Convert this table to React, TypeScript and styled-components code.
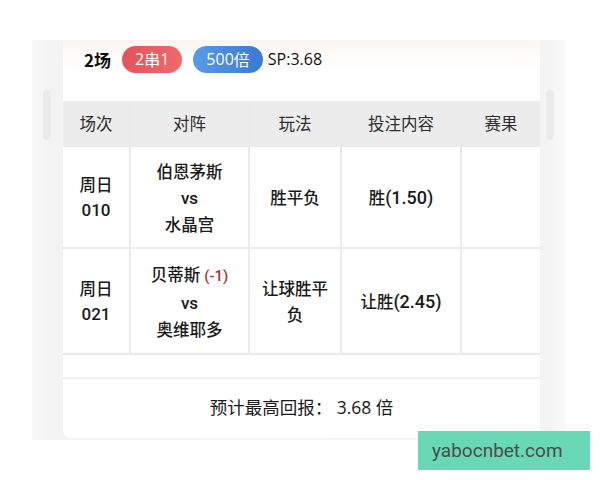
import React from "react";
import styled, { createGlobalStyle } from "styled-components";

const Global = createGlobalStyle`
  html, body { margin: 0; padding: 0; background: #ffffff; }
  body { font-family: "Noto Sans CJK SC", "Noto Sans", sans-serif; color: #1a1a1a; }
`;

const Page = styled.div`
  width: 600px;
  height: 480px;
  position: relative;
  overflow: hidden;
  background: #fff;
`;

const Frame = styled.div`
  position: relative;
  margin: 40px 0 0 32px;
  width: 534px;
  height: 400px;
  background: linear-gradient(90deg, #fafafa 0%, #f3f3f3 3%, #f4f4f4 97%, #fafafa 100%);
  display: flex;
  padding-left: 31px;
  box-sizing: border-box;
`;

const ScrollHint = styled.div<{ $side: "left" | "right" }>`
  position: absolute;
  top: 50px;
  ${(p) => (p.$side === "left" ? "left: 11px;" : "right: 12px;")}
  width: 8px;
  height: 50px;
  border-radius: 4px;
  background: #ebebeb;
`;

const Card = styled.div`
  width: 477px;
  height: 398px;
  background: #fff;
  border-radius: 0 0 8px 8px;
  display: flex;
  flex-direction: column;
  overflow: hidden;
`;

const Top = styled.div`
  height: 61px;
  display: flex;
  align-items: flex-start;
  padding: 5px 0 0 21px;
  box-sizing: border-box;
  background: linear-gradient(180deg, #fdf5f2 0%, #fffcfa 30%, #ffffff 60%);
`;

const TopRow = styled.div`
  display: flex;
  align-items: center;
  height: 28px;
`;

const Count = styled.span`
  font-weight: 700;
  font-size: 17px;
  color: #111;
  margin-right: 11px;
`;

const Pill = styled.span<{ $color: "red" | "blue" }>`
  display: inline-flex;
  align-items: center;
  justify-content: center;
  height: 27px;
  padding: 0 13px;
  border-radius: 14px;
  color: #fff;
  font-size: 16px;
  background: ${(p) =>
    p.$color === "red"
      ? "linear-gradient(90deg, #e4535c, #ee6a6c)"
      : "linear-gradient(90deg, #5a9be6, #3b79d3)"};
  margin-right: ${(p) => (p.$color === "red" ? "11px" : "5px")};
`;

const Num = styled.span`
  font-family: "Open Sans", "Noto Sans", sans-serif;
`;

const SP = styled.span`
  font-family: "Open Sans", "Noto Sans", sans-serif;
  font-size: 16px;
  color: #111;
`;

const Table = styled.div`
  display: grid;
  grid-template-columns: 66px 117px 90px 118px 78px;
  column-gap: 2px;
  row-gap: 2px;
  background: #ebebeb;
  padding-bottom: 2px;
`;

const HeadCell = styled.div`
  height: 44px;
  background: #ececec;
  display: flex;
  align-items: center;
  justify-content: center;
  font-size: 16.5px;
  color: #2e2e2e;
`;

const Cell = styled.div<{ $h: number }>`
  height: ${(p) => p.$h}px;
  background: #fff;
  display: flex;
  flex-direction: column;
  align-items: center;
  justify-content: center;
  text-align: center;
  font-size: 16.5px;
  font-weight: 500;
  line-height: 26px;
  color: #1a1a1a;
  padding: 0 8px;
`;

const CellNum = styled.span`
  font-family: Roboto, "Open Sans", sans-serif;
  font-weight: 500;
  font-size: 17px;
`;

const BetNum = styled.span`
  font-family: Roboto, "Open Sans", sans-serif;
  font-weight: 500;
  font-size: 18px;
`;

const Handicap = styled.span`
  color: #a8322f;
  font-size: 15px;
  font-weight: 500;
  margin-left: 4px;
  font-family: Roboto, "Open Sans", sans-serif;
`;

const Strip = styled.div`
  height: 22px;
  border-bottom: 2px solid #f0f0f0;
`;

const Footer = styled.div`
  flex: 1;
  display: flex;
  align-items: center;
  justify-content: center;
  font-size: 17.5px;
  color: #1a1a1a;
  padding-bottom: 4px;
`;

const Watermark = styled.div`
  position: absolute;
  left: 418px;
  top: 431px;
  width: 172px;
  height: 39px;
  box-sizing: border-box;
  padding-left: 14px;
  background: #68d8b6;
  color: #4c4c4c;
  font-family: Roboto, "Liberation Sans", sans-serif;
  font-size: 19px;
  display: flex;
  align-items: center;
`;

const rows = [
  {
    h: 100,
    id: ["周日", "010"],
    match: [<span key="a">伯恩茅斯</span>, <CellNum key="v">vs</CellNum>, "水晶宫"],
    play: ["胜平负"],
    bet: ["胜", "(1.50)"],
  },
  {
    h: 104,
    id: ["周日", "021"],
    match: [
      <span key="b">
        贝蒂斯<Handicap>(-1)</Handicap>
      </span>,
      <CellNum key="v">vs</CellNum>,
      "奥维耶多",
    ],
    play: ["让球胜平", "负"],
    bet: ["让胜", "(2.45)"],
  },
];

export default function App() {
  return (
    <Page>
      <Global />
      <Frame>
        <ScrollHint $side="left" />
        <ScrollHint $side="right" />
        <Card>
          <Top>
            <TopRow>
              <Count>2场</Count>
              <Pill $color="red">
                <Num>2</Num>串<Num>1</Num>
              </Pill>
              <Pill $color="blue">
                <Num>500</Num>倍
              </Pill>
              <SP>SP:3.68</SP>
            </TopRow>
          </Top>
          <Table>
            {["场次", "对阵", "玩法", "投注内容", "赛果"].map((t) => (
              <HeadCell key={t}>{t}</HeadCell>
            ))}
            {rows.map((r, i) => (
              <React.Fragment key={i}>
                <Cell $h={r.h}>
                  <div>{r.id[0]}</div>
                  <CellNum>{r.id[1]}</CellNum>
                </Cell>
                <Cell $h={r.h}>
                  {r.match.map((l, j) => (
                    <div key={j}>{l}</div>
                  ))}
                </Cell>
                <Cell $h={r.h}>
                  {r.play.map((l) => (
                    <div key={l}>{l}</div>
                  ))}
                </Cell>
                <Cell $h={r.h}>
                  <div>
                    {r.bet[0]}
                    <BetNum>{r.bet[1]}</BetNum>
                  </div>
                </Cell>
                <Cell $h={r.h} />
              </React.Fragment>
            ))}
          </Table>
          <Strip />
          <Footer>
            预计最高回报：<Num>&nbsp;3.68&nbsp;</Num>倍
          </Footer>
        </Card>
      </Frame>
      <Watermark>yabocnbet.com</Watermark>
    </Page>
  );
}
